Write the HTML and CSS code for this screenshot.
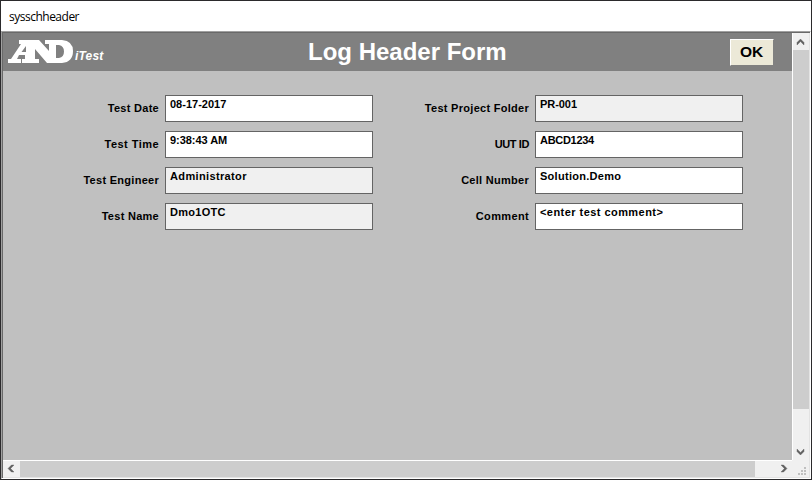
FILE: index.html
```html
<!DOCTYPE html>
<html lang="en">
<head>
<meta charset="utf-8">
<title>sysschheader</title>
<link rel="stylesheet" href="styles.css">
</head>
<body>
<div class="window">
  <div class="titlebar">sysschheader</div>
  <div class="frame">
    <main class="view">
      <header class="banner">
        <div class="brand">
          <svg class="logo" width="66" height="24" viewBox="0 0 66 24">
            <path fill="#fff" fill-rule="evenodd" d="M11 0H31L41 11V4H37V0H54Q65 1 65 11Q65 22 54 23H39L27 9V19H31V23H14V19H17V15H11L9 19H13V23H0V19H3L13 4H11ZM18 6L13.5 12H18ZM48 5V18H51Q56 17 56 11.500Q56 6 51 5Z"/>
          </svg>
          <span class="product">iTest</span>
        </div>
        <h1 class="heading">Log Header Form</h1>
        <button class="ok">OK</button>
      </header>
      <form class="fields">
        <div class="column">
          <div class="row"><span class="label">Test Date</span><div class="box">08-17-2017</div></div>
          <div class="row"><span class="label wide">Test Time</span><div class="box tight">9:38:43 AM</div></div>
          <div class="row"><span class="label">Test Engineer</span><div class="box medium locked">Administrator</div></div>
          <div class="row"><span class="label">Test Name</span><div class="box locked">Dmo1OTC</div></div>
        </div>
        <div class="column">
          <div class="row"><span class="label">Test Project Folder</span><div class="box tight locked">PR-001</div></div>
          <div class="row"><span class="label narrow">UUT ID</span><div class="box narrow">ABCD1234</div></div>
          <div class="row"><span class="label">Cell Number</span><div class="box">Solution.Demo</div></div>
          <div class="row"><span class="label medium">Comment</span><div class="box wide">&lt;enter test comment&gt;</div></div>
        </div>
      </form>
    </main>
    <div class="vbar">
      <svg class="arrow" width="16" height="17" viewBox="0 0 16 17"><path d="M4 9.500L7.500 6L11 9.500V12L7.500 8.600L4 12Z"/></svg>
      <div class="vthumb"></div>
      <svg class="arrow" width="16" height="17" viewBox="0 0 16 17"><path d="M4 8.500L7.500 12L11 8.500V6L7.500 9.400L4 6Z"/></svg>
    </div>
    <div class="hbar">
      <svg class="arrow" width="17" height="16" viewBox="0 0 17 16"><path d="M8.500 4L5 7.500L8.500 11H11L7.600 7.500L11 4Z"/></svg>
      <div class="hthumb"></div>
      <svg class="arrow" width="17" height="16" viewBox="0 0 17 16"><path d="M8.500 4L12 7.500L8.500 11H6L9.400 7.500L6 4Z"/></svg>
    </div>
    <div class="corner">
      <svg width="16" height="16" viewBox="0 0 16 16"><path fill="#bfbfbf" d="M11 6h2v2h-2zM8 9h2v2h-2zM11 9h2v2h-2zM5 12h2v2h-2zM8 12h2v2h-2zM11 12h2v2h-2z"/></svg>
    </div>
  </div>
</div>
</body>
</html>
```

FILE: styles.css
```css
* { box-sizing: border-box; }
body { margin: 0; font-family: "Liberation Sans", Arial, sans-serif; }
.window { width: 812px; height: 480px; border: 1px solid #2b2a2c; background: #fff; display: flex; flex-direction: column; }
.titlebar { height: 30px; padding: 0 8px; font: 12px/31px "Open Sans", sans-serif; color: #000; letter-spacing: -0.5px; }
.frame { flex: 1; display: grid; grid-template-columns: 789px 17px; grid-template-rows: 427px 17px; border: 1px solid; border-color: #a0a0a0 #fff #fff #a0a0a0; box-shadow: inset 1px 1px #696969, inset -1px -1px #e3e3e3; padding: 1px; }
.view { background: #c0c0c0; }
.banner { height: 38px; background: #808080; display: grid; grid-template-columns: 299px 1fr 62px; align-items: center; }
.brand { display: flex; align-items: flex-start; padding: 0 0 0 5px; }
.product { margin: 8px 0 0 1px; font: italic bold 12px/16px "Liberation Sans", sans-serif; letter-spacing: 0.2px; color: #fff; }
.heading { margin: 0; padding-left: 6px; font-size: 24px; line-height: 38px; color: #fff; white-space: nowrap; }
.ok { width: 44px; height: 27px; padding: 0 1px 0 0; border: 1px solid; border-color: #fff #808080 #808080 #fff; background: #ece9d8; color: #000; font: bold 15.5px "Liberation Sans", sans-serif; }
.fields { display: flex; padding-top: 24px; }
.column { width: 370px; display: flex; flex-direction: column; gap: 9px; }
.row { display: flex; align-items: center; justify-content: flex-end; height: 27px; font-size: 11px; font-weight: bold; letter-spacing: 0.28px; color: #000; }
.label { margin-right: 6px; padding-bottom: 2px; line-height: 14px; }
.box { width: 208px; height: 27px; border: 1px solid #646464; background: #fff; padding: 1px 4px; line-height: 15px; }
.row:first-child .box:not(.locked) { letter-spacing: 0; }
.locked { background: #f0f0f0; }
.medium { letter-spacing: 0.36px; }
.wide { letter-spacing: 0.45px; }
.tight { letter-spacing: -0.05px; }
.narrow { letter-spacing: -0.3px; }
.label.narrow { letter-spacing: -0.4px; }
.vbar { background: #f0f0f0; border-left: 1px solid #fff; display: flex; flex-direction: column; }
.vthumb { height: 359px; background: #cdcdcd; margin-bottom: auto; }
.hbar { background: #f0f0f0; border-top: 1px solid #fff; display: flex; }
.hthumb { width: 735px; background: #cdcdcd; margin-right: auto; }
.corner { background: #f0f0f0; padding: 1px 0 0 1px; }
.corner svg { display: block; }
.arrow { display: block; fill: #606060; stroke: #606060; stroke-width: 0.4; flex: none; }
```
